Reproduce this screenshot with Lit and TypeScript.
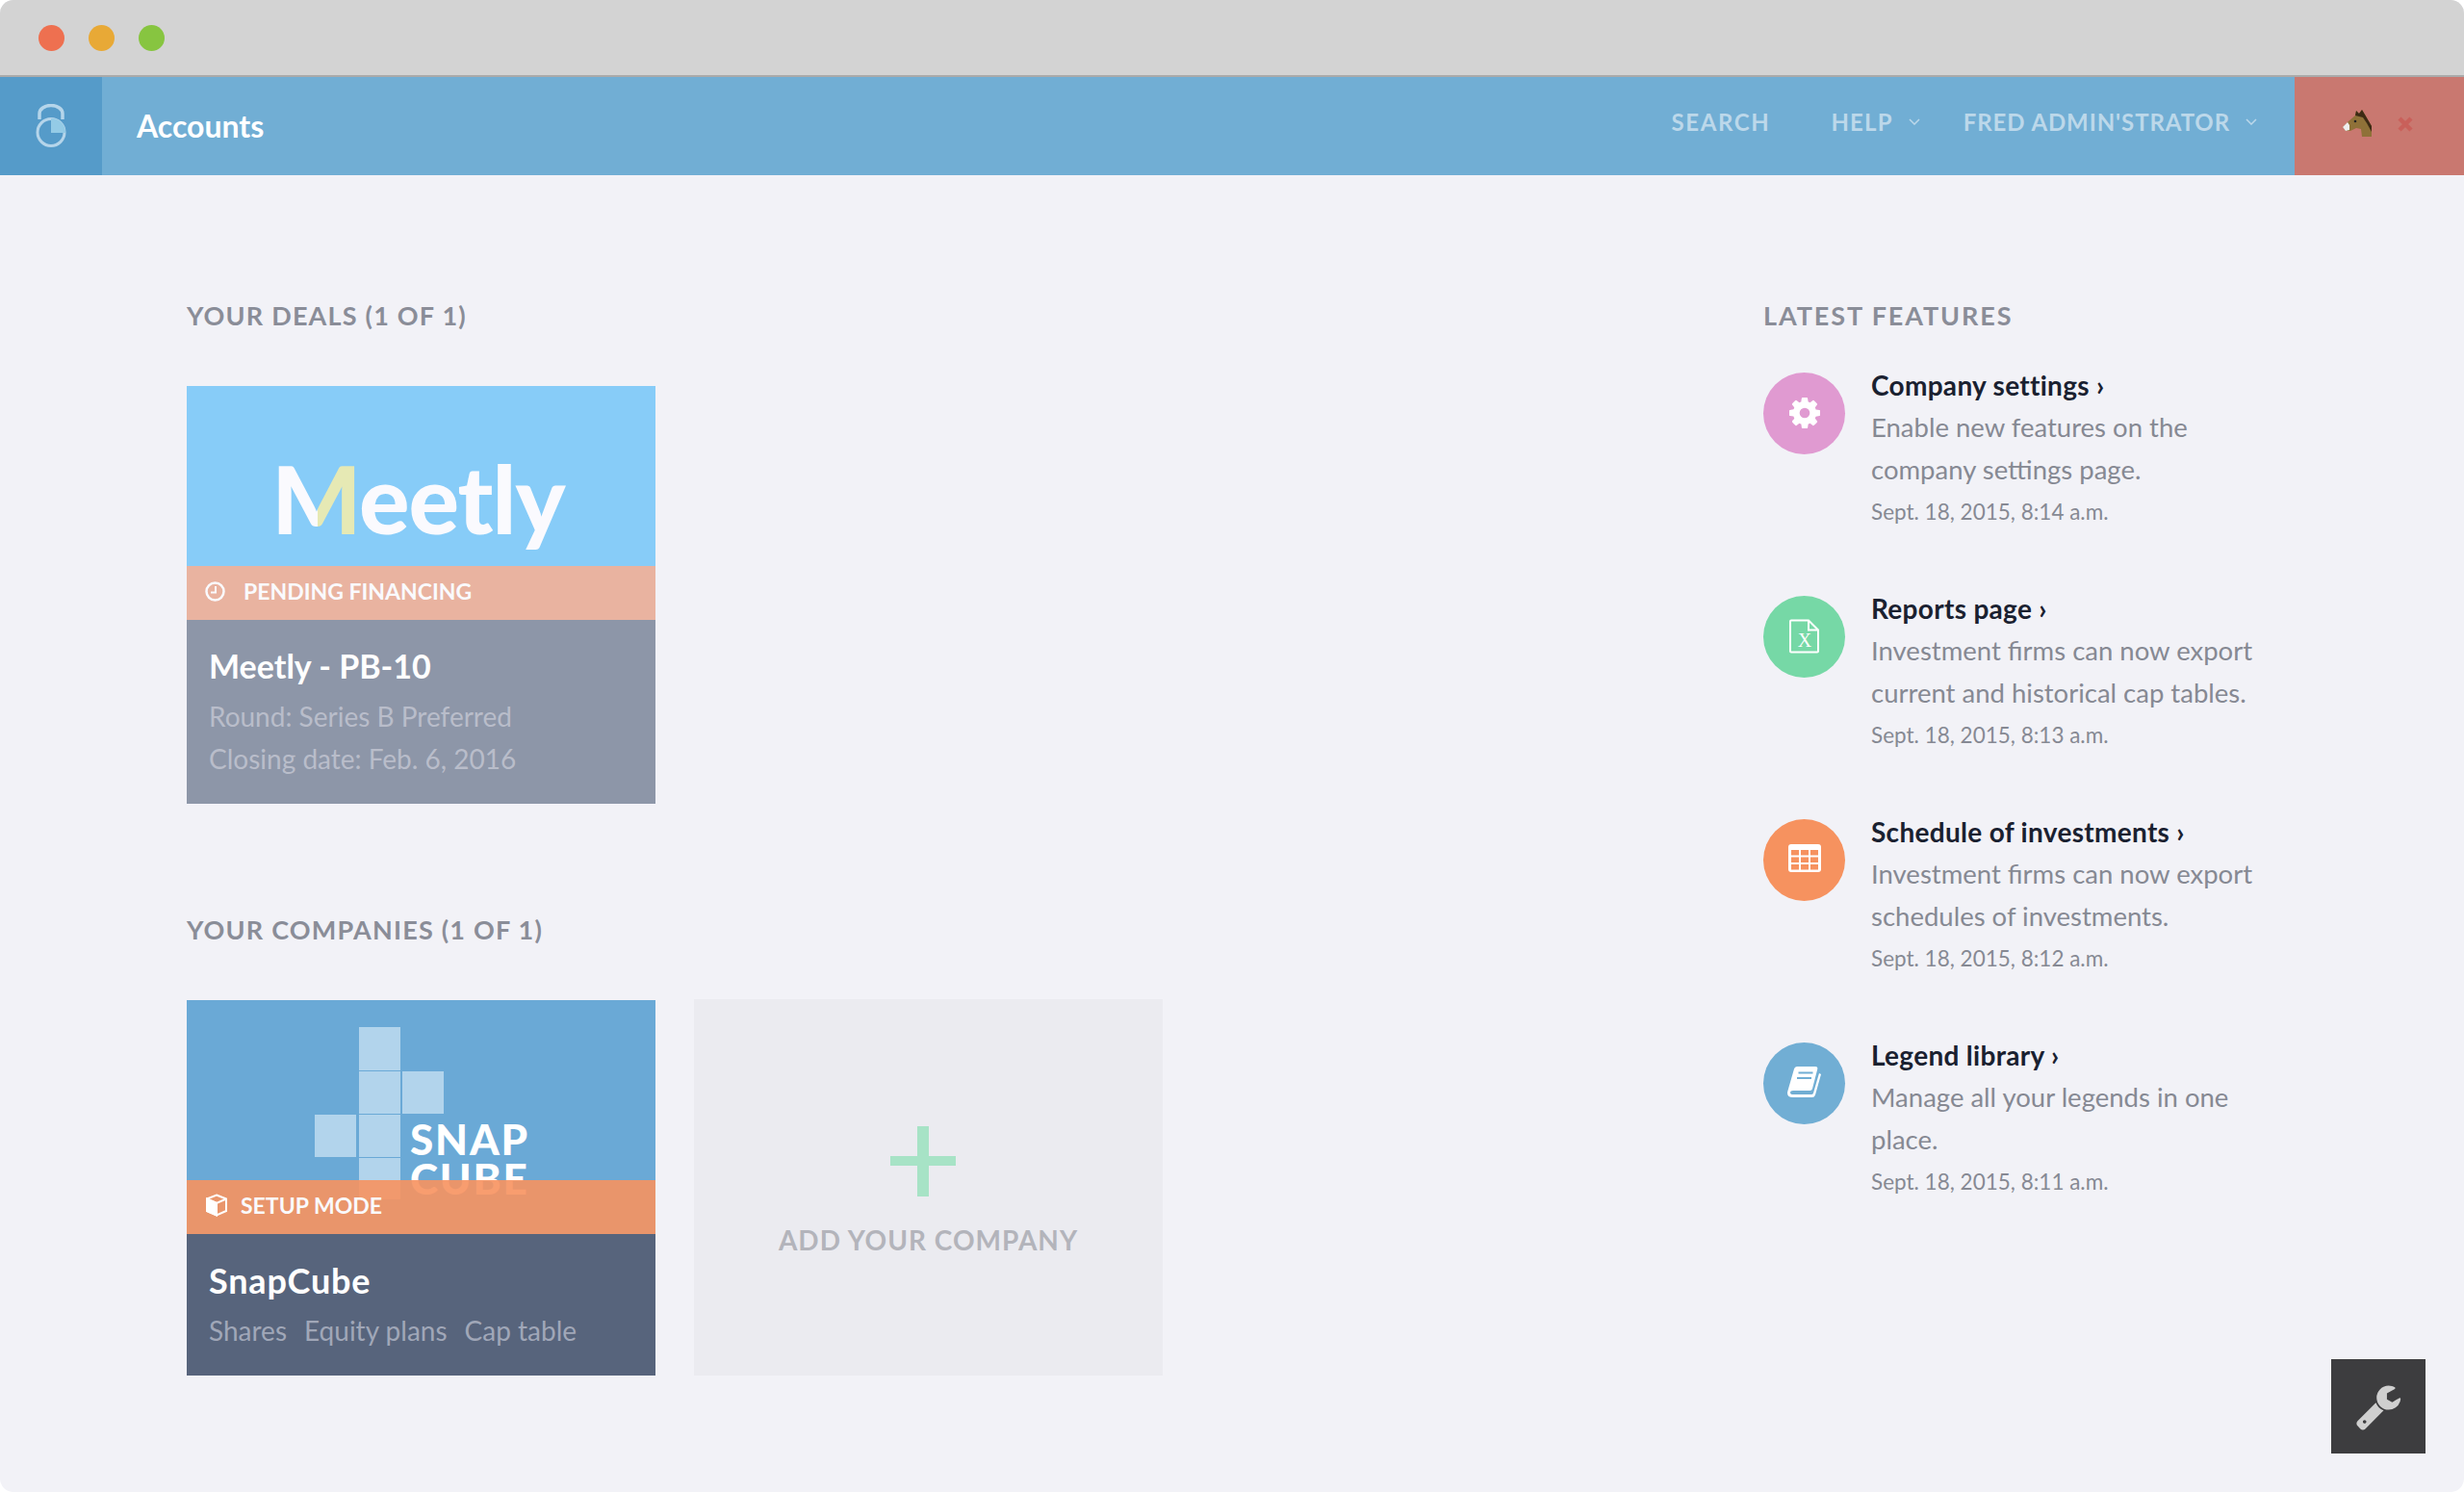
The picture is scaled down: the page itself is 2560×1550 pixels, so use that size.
import { html, css, svg, LitElement } from "lit";
import { customElement } from "lit/decorators.js";

const features = [
  {
    title: "Company settings",
    lines: ["Enable new features on the", "company settings page."],
    date: "Sept. 18, 2015, 8:14 a.m.",
    color: "#e09ad1",
    icon: "gear",
  },
  {
    title: "Reports page",
    lines: ["Investment firms can now export", "current and historical cap tables."],
    date: "Sept. 18, 2015, 8:13 a.m.",
    color: "#76d8a6",
    icon: "file",
  },
  {
    title: "Schedule of investments",
    lines: ["Investment firms can now export", "schedules of investments."],
    date: "Sept. 18, 2015, 8:12 a.m.",
    color: "#f6925f",
    icon: "table",
  },
  {
    title: "Legend library",
    lines: ["Manage all your legends in one", "place."],
    date: "Sept. 18, 2015, 8:11 a.m.",
    color: "#71aed4",
    icon: "book",
  },
];

const icons: Record<string, unknown> = {
  gear: html`<svg class="nudge" width="32" height="32" viewBox="0 0 1536 1536" fill="#fff">
    <path
      d="M1024 768q0-106-75-181t-181-75-181 75-75 181 75 181 181 75 181-75 75-181zm512-109v222q0 12-8 23t-20 13l-185 28q-19 54-39 91 35 50 107 138 10 12 10 25t-9 23q-27 37-99 108t-94 71q-12 0-26-9l-138-108q-44 23-91 38-16 136-29 186-7 28-36 28h-222q-14 0-24.500-8.500t-11.500-21.500l-28-184q-49-16-90-37l-141 107q-10 9-25 9-14 0-25-11-126-114-165-168-7-10-7-23 0-12 8-23 15-21 51-66.500t54-70.500q-27-50-41-99l-183-27q-13-2-21-12.500t-8-23.500v-222q0-12 8-23t19-13l186-28q14-46 39-92-40-57-107-138-10-12-10-24 0-10 9-23 26-36 98.500-107.500t94.500-71.500q13 0 26 10l138 107q44-23 91-38 16-136 29-186 7-28 36-28h222q14 0 24.500 8.500t11.500 21.500l28 184q49 16 90 37l142-107q9-9 24-9 13 0 25 10 129 119 165 170 7 8 7 22 0 12-8 23-15 21-51 66.500t-54 70.500q26 50 41 98l183 28q13 2 21 12.500t8 23.500z"
    />
  </svg>`,
  file: html`<svg class="nudge" width="32" height="36" viewBox="0 0 32 36" fill="none" stroke="#fff" stroke-width="2">
    <path d="M2 1.500h18l10 10v22q0 1-1 1H2q-1 0-1-1V2.500q0-1 1-1z" />
    <path d="M20 1.500v10h10" />
    <text x="16" y="29" text-anchor="middle" class="file-x" fill="#fff" stroke="none">X</text>
  </svg>`,
  table: html`<svg class="raise" width="34" height="29" viewBox="0 0 34 29">
    <rect width="34" height="29" rx="3" fill="#fff" />
    <g fill="#f6925f">
      ${[6, 13.5, 21].map((y) =>
        [3, 13, 23].map((x) => svg`<rect x=${x} y=${y} width="8" height="5.500" />`)
      )}
    </g>
  </svg>`,
  book: html`<svg class="nudge" width="35" height="33" viewBox="0 0 35 33">
    <path
      fill="#fff"
      d="M10 0h19q3 0 2.200 3L26 23q-.5 2-2.500 2H6q-3 0-3 2t3 2h19q1.500 0 2-1.500L33 7l2 1-6 21.500q-.8 2.500-3.500 2.500H6q-6 0-6-4.500 0-1 .5-2.500L7 2.500Q7.500 0 10 0z"
    />
    <path stroke="#71aed4" stroke-width="2" d="M11.500 6.500h15M10 12h15" />
  </svg>`,
};

@customElement("app-root")
export class AppRoot extends LitElement {
  static styles = css`
    :host {
      display: block;
      width: 2560px;
      height: 1550px;
      background: #fff;
      font-family: Lato, "Liberation Sans", sans-serif;
    }

    .window {
      position: relative;
      height: 100%;
      overflow: hidden;
      border-radius: 14px;
      background: #f2f2f7;
    }

    .titlebar {
      display: flex;
      align-items: center;
      gap: 25px;
      height: 78px;
      padding-left: 40px;
      background: #d3d3d3;
      border-bottom: 2px solid #aaa;
    }

    .dot {
      width: 27px;
      height: 27px;
      border-radius: 50%;
    }

    nav {
      display: flex;
      align-items: center;
      height: 102px;
      background: #71aed4;
    }

    .logo {
      display: flex;
      align-items: center;
      justify-content: center;
      width: 106px;
      height: 100%;
      background: #559bc9;
    }

    .page-title {
      margin: -2px 0 0 36px;
      font-size: 32px;
      font-weight: 700;
      color: #fff;
    }

    .links {
      display: flex;
      align-items: center;
      margin-left: auto;
      height: 100%;
      padding: 0 39px 9px 0;
      box-sizing: border-box;
      font-size: 24px;
      font-weight: 700;
      letter-spacing: 1.2px;
      color: #bcd8ea;
    }

    .links svg {
      margin-left: 16px;
    }

    .search {
      margin-right: 63px;
      letter-spacing: 1.6px;
    }

    .user {
      margin-left: 45px;
      letter-spacing: 0.9px;
    }

    .impersonate {
      display: flex;
      align-items: center;
      gap: 27px;
      width: 176px;
      height: 100%;
      padding: 0 0 5px 50px;
      box-sizing: border-box;
      background: #c97870;
    }

    .content {
      display: grid;
      grid-template-columns: 1638px 1fr;
      padding: 124px 0 0 194px;
    }

    h2 {
      margin: 0;
      font-size: 27px;
      line-height: 44px;
      font-weight: 700;
      letter-spacing: 1.2px;
      color: #8a8d98;
    }

    aside h2 {
      letter-spacing: 1.9px;
    }

    .cards {
      display: flex;
      gap: 40px;
      margin: 51px 0 109px;
    }

    .card {
      display: block;
      width: 487px;
      overflow: hidden;
    }

    .snap-card {
      background: #6aa9d6;
    }

    .card-image {
      position: relative;
      height: 187px;
    }

    .meetly-image {
      background: #87ccf8;
      text-align: center;
    }

    .meetly-logo {
      padding: 61px 6px 0 0;
      font-size: 98px;
      line-height: 110px;
      font-weight: 900;
      letter-spacing: -1px;
      color: #fafafe;
    }

    .meetly-logo span {
      background: linear-gradient(90deg, #fafafe 53%, #e6e9b4 53%);
      -webkit-background-clip: text;
      background-clip: text;
      color: transparent;
    }

    .snap-logo {
      position: absolute;
      top: 0;
      left: 0;
    }

    .snap-logo text {
      font-size: 44px;
      font-weight: 900;
      letter-spacing: 1.8px;
      fill: #fff;
    }

    .status {
      position: relative;
      display: flex;
      align-items: center;
      height: 56px;
      padding: 0 0 4px 19px;
      box-sizing: border-box;
      font-size: 23px;
      font-weight: 700;
      color: #fafafe;
    }

    .status.pending {
      gap: 19px;
      background: #e9b3a0;
    }

    .status.setup {
      gap: 13px;
      background: rgba(247, 146, 95, 0.9);
    }

    .card-info {
      padding: 26px 23px 0;
      box-sizing: border-box;
    }

    .card-info h3 {
      margin: 0 0 8px;
      font-size: 34px;
      line-height: 44px;
      font-weight: 700;
      color: #fff;
    }

    .card-info p {
      margin: 0;
      font-size: 28px;
      line-height: 44px;
    }

    .meetly-info {
      height: 191px;
      background: #8d96a8;
      color: #b9bdca;
    }

    .snap-info {
      height: 147px;
      background: #57647c;
      color: #a0a7b8;
    }

    .snap-info h3 {
      font-size: 36px;
      letter-spacing: 0.8px;
    }

    .snap-info p {
      display: flex;
      gap: 18px;
    }

    .add-card {
      display: flex;
      flex-direction: column;
      align-items: center;
      box-sizing: border-box;
      width: 487px;
      height: 391px;
      margin-top: -1px;
      padding-top: 132px;
      background: #ebebf0;
    }

    .add-card svg {
      margin-right: 11px;
    }

    .add-card span {
      margin-top: 23px;
      font-size: 28px;
      line-height: 44px;
      font-weight: 700;
      letter-spacing: 1px;
      color: #b3b4bb;
    }

    .features {
      margin-top: 29px;
    }

    .feature {
      display: flex;
      gap: 27px;
      height: 232px;
    }

    .feature-body {
      margin-top: -1px;
    }

    .feature-icon {
      display: flex;
      align-items: center;
      justify-content: center;
      flex: none;
      width: 85px;
      height: 85px;
      margin-top: 8px;
      border-radius: 50%;
    }

    .feature-icon .nudge {
      margin-bottom: 2px;
    }

    .feature-icon .raise {
      margin-bottom: 4px;
    }

    .feature-title {
      font-size: 28px;
      line-height: 44px;
      font-weight: 700;
      letter-spacing: 0.3px;
      color: #1a2130;
    }

    .feature-text {
      font-size: 27.5px;
      line-height: 44px;
      color: #868993;
      white-space: nowrap;
    }

    .feature-date {
      font-size: 22.500px;
      line-height: 44px;
      color: #868993;
    }

    .file-x {
      font-family: "Liberation Serif", serif;
      font-size: 20px;
    }

    .tools {
      position: absolute;
      left: 2422px;
      top: 1412px;
      display: flex;
      align-items: center;
      justify-content: center;
      width: 98px;
      height: 98px;
      background: #3d3d3f;
    }
  `;

  private chevron() {
    return html`<svg width="12" height="7" viewBox="0 0 12 7" fill="none" stroke="#bcd8ea" stroke-width="1.500">
      <path d="M1 1l5 5 5-5" />
    </svg>`;
  }

  private renderFeature(f: (typeof features)[number]) {
    return html`
      <div class="feature">
        <div class="feature-icon" style="background:${f.color}">${icons[f.icon]}</div>
        <div class="feature-body">
          <div class="feature-title">${f.title} ›</div>
          ${f.lines.map((line) => html`<div class="feature-text">${line}</div>`)}
          <div class="feature-date">${f.date}</div>
        </div>
      </div>
    `;
  }

  render() {
    return html`
      <div class="window">
        <div class="titlebar">
          <div class="dot" style="background:#ee7050"></div>
          <div class="dot" style="background:#e8a936"></div>
          <div class="dot" style="background:#87c540"></div>
        </div>

        <nav>
          <div class="logo">
            <svg width="34" height="46" viewBox="0 0 34 46" fill="none">
              <path d="M5 16V10a12 8.500 0 0 1 24 0v6" stroke="#b5d5ea" stroke-width="3.500" />
              <circle cx="17" cy="29.500" r="14" stroke="#b5d5ea" stroke-width="3" />
              <path d="M17 15a14.500 14.500 0 0 1 15 15H17z" fill="#94cbe6" />
            </svg>
          </div>
          <div class="page-title">Accounts</div>
          <div class="links">
            <span class="search">SEARCH</span>
            <span>HELP</span>${this.chevron()}
            <span class="user">FRED ADMIN'STRATOR</span>${this.chevron()}
          </div>
          <div class="impersonate">
            <svg width="30" height="29" viewBox="0 0 30 29">
              <path fill="#8f7138" d="M0 18l6-6 7-6 1-5 3 3 3-4 3 5 7 12v11H20l-1-8-5-1-6 3H3z" />
              <path fill="#3d2a14" d="M13 6l1-5 3 3 3-4 3 5 7 12v6l-5-9-4-6z" />
              <path fill="#eee" d="M0 18l5-5 2 3v5l-4 1z" />
              <circle cx="13" cy="12" r="1.300" fill="#222" />
            </svg>
            <svg width="16" height="16" viewBox="0 0 16 16" stroke="#c9605a" stroke-width="4.500">
              <path d="M2 2l12 12M14 2L2 14" />
            </svg>
          </div>
        </nav>

        <div class="content">
          <main>
            <h2>YOUR DEALS (1 OF 1)</h2>
            <div class="cards">
              <a class="card">
                <div class="card-image meetly-image">
                  <div class="meetly-logo"><span>M</span>eetly</div>
                </div>
                <div class="status pending">
                  <svg width="21" height="21" viewBox="0 0 21 21" fill="none" stroke="#fafafe" stroke-width="2.500">
                    <circle cx="10.500" cy="10.500" r="9" />
                    <path d="M11 5v6.500H6" stroke-width="2" />
                  </svg>
                  PENDING FINANCING
                </div>
                <div class="card-info meetly-info">
                  <h3>Meetly - PB-10</h3>
                  <p>Round: Series B Preferred</p>
                  <p>Closing date: Feb. 6, 2016</p>
                </div>
              </a>
            </div>

            <h2>YOUR COMPANIES (1 OF 1)</h2>
            <div class="cards">
              <a class="card snap-card">
                <div class="card-image">
                  <svg class="snap-logo" width="487" height="243" viewBox="0 0 487 243">
                    <g fill="#b2d4ec">
                      <rect x="179" y="28" width="43" height="45" />
                      <rect x="179" y="74" width="43" height="44" />
                      <rect x="224" y="74" width="43" height="44" />
                      <rect x="133" y="119" width="43" height="44" />
                      <rect x="179" y="119" width="43" height="44" />
                      <rect x="179" y="164" width="43" height="43" />
                    </g>
                    <text x="232" y="161">SNAP</text>
                    <text x="232" y="202">CUBE</text>
                  </svg>
                </div>
                <div class="status setup">
                  <svg width="24" height="24" viewBox="0 0 24 24" fill="none" stroke="#fff" stroke-width="2">
                    <path d="M12 1.500l10 4v12.500l-10 4.500-10-4.500V5.500z" />
                    <path d="M2 5.500l10 4.500 10-4.500M12 10v12.500" />
                    <path d="M2 5.500l10 4.500v12.500l-10-4.500z" fill="#fff" />
                  </svg>
                  SETUP MODE
                </div>
                <div class="card-info snap-info">
                  <h3>SnapCube</h3>
                  <p><span>Shares</span><span>Equity plans</span><span>Cap table</span></p>
                </div>
              </a>
              <a class="add-card">
                <svg width="68" height="73" viewBox="0 0 68 73" fill="#a7e3c6">
                  <rect x="28" width="12" height="73" />
                  <rect y="31" width="68" height="10" />
                </svg>
                <span>ADD YOUR COMPANY</span>
              </a>
            </div>
          </main>

          <aside>
            <h2>LATEST FEATURES</h2>
            <div class="features">${features.map((f) => this.renderFeature(f))}</div>
          </aside>
        </div>

        <a class="tools">
          <svg width="50" height="50" viewBox="0 0 1792 1792" fill="#cfcfcf">
            <path
              d="M448 1472q0-26-19-45t-45-19-45 19-19 45 19 45 45 19 45-19 19-45zm644-420l-682 682q-37 37-90 37-52 0-91-37l-106-108q-38-36-38-90 0-53 38-91l681-681q39 98 114.500 173.500t173.500 114.500zm634-435q0 39-23 106-47 134-164.500 217.500t-258.500 83.500q-185 0-316.500-131.500t-131.500-316.500 131.500-316.500 316.500-131.500q58 0 121.500 16.500t107.500 46.500q16 11 16 28t-16 28l-293 169v224l193 107q5-3 79-48.500t135.500-81 70.500-35.500q15 0 23.500 10t8.500 25z"
            />
          </svg>
        </a>
      </div>
    `;
  }
}
